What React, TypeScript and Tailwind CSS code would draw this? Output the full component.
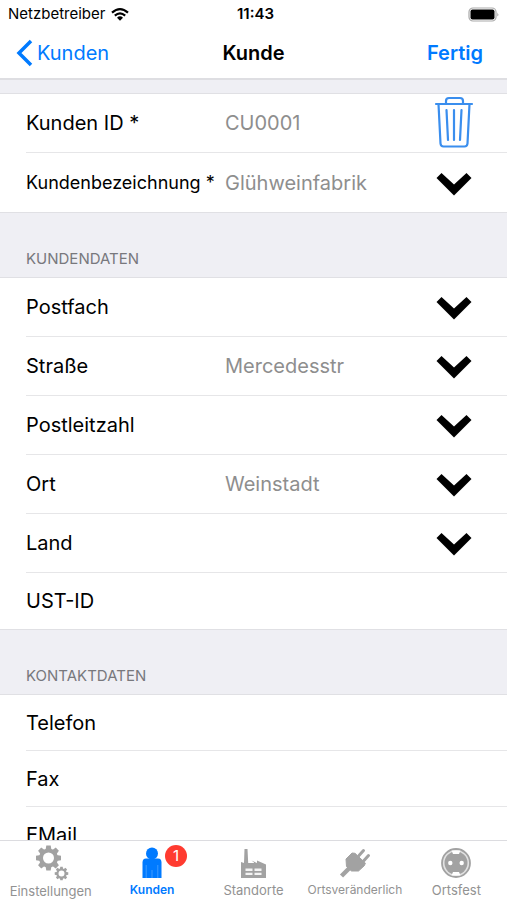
import type { ReactNode } from "react";

type Field = { id: string; label: string; value?: string; action?: "trash" | "chevron"; small?: boolean };

const head: Field[] = [
  { id: "kunden-id", label: "Kunden ID *", value: "CU0001", action: "trash" },
  { id: "bezeichnung", label: "Kundenbezeichnung *", value: "Glühweinfabrik", action: "chevron", small: true },
];
const kundendaten: Field[] = [
  { id: "postfach", label: "Postfach", action: "chevron" },
  { id: "strasse", label: "Straße", value: "Mercedesstr", action: "chevron" },
  { id: "plz", label: "Postleitzahl", action: "chevron" },
  { id: "ort", label: "Ort", value: "Weinstadt", action: "chevron" },
  { id: "land", label: "Land", action: "chevron" },
  { id: "ust", label: "UST-ID" },
];
const kontaktdaten: Field[] = [
  { id: "telefon", label: "Telefon" },
  { id: "fax", label: "Fax" },
  { id: "email", label: "EMail" },
];

function Trash() {
  return (
    <svg width="40" height="54" viewBox="0 0 40 54" fill="none" stroke="#3a8eee" strokeWidth="2.200" strokeLinecap="round" strokeLinejoin="round">
      <path d="M2 8H38M12 7.500V5q0-3 3-3h11q3 0 3 3v2.500" />
      <path d="M4.500 8l2 39.500q.3 3 3 3h21q2.700 0 3-3l2-39.500" />
      <path d="M12.500 14l1.500 30M20 14v30M27.500 14l-1.500 30" />
    </svg>
  );
}

function Chevron() {
  return (
    <svg className="mt-0.5" width="36" height="24" viewBox="0 0 36 24">
      <path d="M0.500 6L5.500 1 18 12.500 30.500 1 35.500 6 18 23.500z" fill="#000" />
    </svg>
  );
}

function Row({ field }: { field: Field }) {
  return (
    <div className={`flex items-center border-b border-[#e6e6e8] last:border-b-0 ${field.action ? "h-[59px]" : "h-14"}`}>
      <label htmlFor={field.id} className={`w-[199px] shrink-0 whitespace-nowrap ${field.small ? "text-[18px]" : "text-[20px]"}`}>
        {field.label}
      </label>
      <input id={field.id} defaultValue={field.value} className="min-w-0 flex-1 bg-transparent text-[20px] text-[#8e8e8e] outline-none" />
      {field.action && (
        <button type="button" aria-label={field.action === "trash" ? "Löschen" : "Auswählen"} className="mr-[33px] flex w-10 shrink-0 justify-center">
          {field.action === "trash" ? <Trash /> : <Chevron />}
        </button>
      )}
    </div>
  );
}

function Section({ title, fields }: { title?: string; fields: Field[] }) {
  return (
    <section>
      {title ? (
        <h2 className="flex h-[66px] items-end border-y border-[#e0e0e4] bg-[#efeff4] pb-2 pl-[26px] text-[15px] leading-5 text-[#78787d]">{title}</h2>
      ) : (
        <div className="h-[14px] border-b border-[#e0e0e4] bg-[#efeff4]" />
      )}
      <div className="pl-[26px]">
        {fields.map((f) => (
          <Row key={f.id} field={f} />
        ))}
      </div>
    </section>
  );
}

function Tab({ label, active, compact, children }: { label: string; active?: boolean; compact?: boolean; children: ReactNode }) {
  return (
    <button
      type="button"
      aria-current={active ? "page" : undefined}
      className={`flex min-w-0 flex-1 flex-col items-center pt-1 leading-5 ${active || compact ? "text-[12px]" : "text-[13px]"} ${active ? "font-semibold text-[#007aff]" : "text-[#929292]"}`}
    >
      <span className="relative flex h-[38px] items-center">{children}</span>
      <span className="whitespace-nowrap">{label}</span>
    </button>
  );
}

const teeth = [0, 45, 90, 135, 180, 225, 270, 315];

function Gear({ x, y, r }: { x: number; y: number; r: number }) {
  return (
    <g transform={`translate(${x} ${y}) scale(${r / 12})`} fill="#a2a2a2">
      <circle r="7.500" fill="none" stroke="#a2a2a2" strokeWidth="4" />
      {teeth.map((a) => (
        <path key={a} d="M-3-8L-2.200-12.500H2.200L3-8z" transform={`rotate(${a})`} />
      ))}
    </g>
  );
}

export default function App() {
  return (
    <div className="flex h-screen flex-col overflow-hidden bg-white font-['Inter','Liberation_Sans',sans-serif] text-black">
      <div className="grid h-7 shrink-0 grid-cols-3 items-center px-2 text-[15px]">
        <div className="flex items-center gap-1.5">
          <span>Netzbetreiber</span>
          <svg width="18" height="13" viewBox="0 0 18 13" fill="none" stroke="#000" strokeWidth="2.200">
            <path d="M1 4.700Q9-2.300 17 4.700M3.800 7.700Q9 3.200 14.200 7.700" />
            <path d="M6 9.700Q9 7 12 9.700L9 12.800z" fill="#000" stroke="none" />
          </svg>
        </div>
        <span className="pl-1 text-center font-semibold">11:43</span>
        <svg className="justify-self-end" width="32" height="15" viewBox="0 0 32 15">
          <rect x="2" y="1" width="27" height="13" rx="4" fill="none" stroke="#a9a9a9" strokeWidth="1.200" />
          <rect x="3.500" y="2.500" width="24" height="10" rx="2" fill="#000" />
          <path d="M30.500 5.500q1.500 2 0 4z" fill="#888" />
        </svg>
      </div>
      <header className="grid h-[52px] shrink-0 grid-cols-3 items-center border-b-2 border-[#dedee2] px-4 text-[20px]">
        <button type="button" className="flex items-center gap-1 text-[#007aff]">
          <svg width="17" height="28" viewBox="0 0 17 28" fill="none" stroke="currentColor" strokeWidth="3.500">
            <path d="M15 2L3 14l12 12" />
          </svg>
          Kunden
        </button>
        <h1 className="text-center font-semibold">Kunde</h1>
        <button type="button" className="justify-self-end pr-2 font-semibold text-[#007aff]">Fertig</button>
      </header>
      <main className="min-h-0 flex-1 overflow-hidden">
        <Section fields={head} />
        <Section title="KUNDENDATEN" fields={kundendaten} />
        <Section title="KONTAKTDATEN" fields={kontaktdaten} />
      </main>
      <nav className="flex h-[60px] shrink-0 border-t border-[#dcdce0] bg-white">
        <Tab label="Einstellungen">
          <svg width="36" height="36" viewBox="0 0 36 36">
            <Gear x={15.5} y={13} r={12} />
            <Gear x={28.5} y={28.5} r={6.5} />
          </svg>
        </Tab>
        <Tab label="Kunden" active>
          <svg width="20" height="32" viewBox="0 0 20 32" fill="currentColor">
            <circle cx="10" cy="6.500" r="6" />
            <path d="M4 11.500h12q3.500 0 3.500 4V31H.5V15.500q0-4 3.500-4z" />
            <path d="M4.200 18v13M15.800 18v13M10 23v8" stroke="#5aaaff" strokeWidth=".7" />
          </svg>
          <span className="absolute -right-[25px] top-0 flex size-[22px] items-center justify-center rounded-full bg-[#ff3b30] text-[15px] font-normal text-white">1</span>
        </Tab>
        <Tab label="Standorte">
          <svg width="26" height="32" viewBox="0 0 26 32">
            <path d="M3.500 2h3l.7 14H13v-.5l-2.500-2 5.500 2.500v-2.500l9 4V31H0V15l3 1z" fill="#a2a2a2" />
            <path d="M4.500 21.500h7v2.500h-7zM13.500 21.500h7v2.500h-7zM4.500 25.700h7v2.300h-7zM13.500 25.700h7v2.300h-7z" fill="#f4f4f4" />
          </svg>
        </Tab>
        <Tab label="Ortsveränderlich" compact>
          <svg width="32" height="32" viewBox="0 0 32 32" fill="#a2a2a2" stroke="#a2a2a2">
            <path d="M7 12L13 6l3 .3L26.300 16l-.8 2.500-6 5.500h-7L7.500 19.500z" strokeLinejoin="round" />
            <path d="M20 8.500l4.500-5M25 13.500l4.500-5" strokeWidth="3" strokeLinecap="round" />
            <path d="M10.500 21L2.500 29" strokeWidth="4.500" />
          </svg>
        </Tab>
        <Tab label="Ortsfest">
          <svg width="32" height="32" viewBox="0 0 32 32" fill="#a2a2a2">
            <circle cx="16" cy="16" r="14" fill="#e2e2e2" stroke="#a2a2a2" strokeWidth="1.800" />
            <circle cx="16" cy="16" r="11.500" />
            <path d="M11.500 3.500h9l-1.500 3.500h-6zM11.500 28.500h9l-1.500-3.500h-6z" fill="#fff" />
            <circle cx="10.300" cy="16" r="2.200" fill="#fff" />
            <circle cx="21.700" cy="16" r="2.200" fill="#fff" />
          </svg>
        </Tab>
      </nav>
    </div>
  );
}
